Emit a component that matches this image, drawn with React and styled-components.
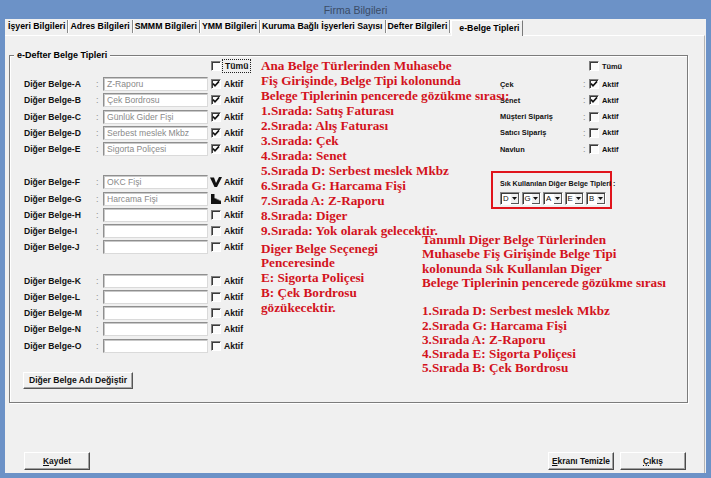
import React from 'react';
import styled, { createGlobalStyle } from 'styled-components';

const GlobalStyle = createGlobalStyle`
  html, body { margin: 0; padding: 0; background: #6c92c7; }
  body { width: 711px; height: 478px; overflow: hidden; font-family: "Liberation Sans", Arial, sans-serif; }
  #root { width: 711px; height: 478px; }
`;

const Window = styled.div`
  width: 711px;
  height: 478px;
  box-sizing: border-box;
  background: #6c92c7;
  padding: 0 5px 5px 5px;
  display: flex;
  flex-direction: column;
`;

const TitleBar = styled.div`
  height: 19px;
  flex: none;
  display: flex;
  align-items: center;
  justify-content: center;
  font-family: "Liberation Sans", Arial, sans-serif;
  font-size: 10.5px;
  color: #3b4c66;
`;

const Client = styled.div`
  flex: 1;
  min-height: 0;
  background: #f0f0f0;
  display: flex;
  flex-direction: column;
`;

const TabStrip = styled.div`
  height: 16px;
  flex: none;
  display: flex;
  align-items: flex-end;
  padding-left: 1px;
  position: relative;
  z-index: 1;
`;

const Tab = styled.div`
  height: 13px;
  line-height: 13px;
  padding: 0 2px;
  margin-bottom: 2px;
  font-size: 8.75px;
  font-weight: bold;
  color: #000;
  white-space: nowrap;
  border-right: 1px solid #8a8a8a;
  box-shadow: 1px 0 0 #ffffff;
`;

const ActiveTab = styled.div`
  height: 16px;
  line-height: 15px;
  padding: 0 3px 0 7px;
  margin-left: 1px;
  margin-bottom: -1px;
  font-size: 8.75px;
  font-weight: bold;
  color: #000;
  white-space: nowrap;
  background: #f0f0f0;
  border-top: 1px solid #fff;
  border-left: 1px solid #fff;
  border-right: 1px solid #7a7a7a;
  box-sizing: border-box;
`;

const Page = styled.div`
  flex: 1;
  min-height: 0;
  display: flex;
  flex-direction: column;
  border-top: 1px solid #ffffff;
  border-right: 1px solid #b5b5b5;
  margin-right: 1px;
`;

const GroupBox = styled.div`
  position: relative;
  margin: 19px 0 0 4px;
  width: 679px;
  height: 348px;
  box-sizing: border-box;
  border: 1px solid #7c7c7c;
  box-shadow: inset 1px 1px 0 #ffffff, 1px 1px 0 #ffffff;
  padding: 3px 0 0 0;
  display: flex;
`;

const Legend = styled.div`
  position: absolute;
  top: -7px;
  left: 4px;
  padding: 0 3px;
  background: #f0f0f0;
  font-size: 9px;
  font-weight: bold;
  line-height: 12px;
  color: #000;
`;

const LeftCol = styled.div`
  width: 467px;
  flex: none;
  padding-left: 14px;
  display: flex;
  flex-direction: column;
`;

const RightCol = styled.div`
  flex: 1;
  display: flex;
  flex-direction: column;
`;

const AllRow = styled.div`
  height: 14px;
  margin-bottom: 3px;
  display: flex;
  align-items: center;
  padding-left: ${p => p.$indent}px;
`;

const Group = styled.div`
  display: flex;
  flex-direction: column;
  margin-top: ${p => p.$gap || 0}px;
`;

const Row = styled.div`
  height: 16.25px;
  display: flex;
  align-items: center;
  padding-left: ${p => p.$pad || 0}px;
`;

const Label = styled.div`
  width: ${p => p.$w}px;
  flex: none;
  font-size: ${p => p.$size}px;
  font-weight: bold;
  color: #111;
  white-space: nowrap;
`;

const Colon = styled.div`
  width: ${p => p.$w}px;
  flex: none;
  font-size: 9px;
  color: #8d8d8d;
  line-height: 10px;
`;

const Field = styled.div`
  width: 105px;
  height: 14px;
  flex: none;
  box-sizing: border-box;
  background: #ffffff;
  border: 1px solid;
  border-color: #8f8f8f #dadada #dadada #8f8f8f;
  box-shadow: inset 1px 1px 0 #c8c8c8;
  font-size: 8.6px;
  line-height: 12px;
  padding-left: 3px;
  color: #8a8a8a;
  white-space: nowrap;
  overflow: hidden;
`;

const Check = styled.div`
  display: flex;
  align-items: center;
  margin-left: ${p => p.$ml || 0}px;
  gap: 3px;
`;

const Box = styled.span`
  width: 10px;
  height: 10px;
  flex: none;
  box-sizing: border-box;
  background: #fbfbfb;
  border-top: 1px solid #7d7d7d;
  border-left: 1px solid #7d7d7d;
  border-right: 1px solid #ffffff;
  border-bottom: 1px solid #ffffff;
  box-shadow: inset 1px 1px 0 #3a3a3a;
  display: flex;
  align-items: center;
  justify-content: center;
`;

const Glyph = styled.span`
  width: 12px;
  height: 12px;
  flex: none;
  margin-left: -1px;
  margin-right: -1px;
  display: flex;
  align-items: center;
  justify-content: center;
`;

const CheckText = styled.span`
  font-size: ${p => p.$size}px;
  font-weight: bold;
  color: #111;
  white-space: nowrap;
  ${p => p.$focus && `outline: 1px dotted #222; outline-offset: 1px; padding: 0 1px;`}
`;

const RenameButton = styled.button`
  margin-top: 18px;
  align-self: flex-start;
  margin-left: -1px;
  width: 110px;
  height: 17px;
  padding: 0;
  background: #f0f0f0;
  border: 1px solid;
  border-color: #ffffff #555555 #555555 #ffffff;
  box-shadow: inset -1px -1px 0 #a5a5a5;
  font-family: "Liberation Sans", Arial, sans-serif;
  font-size: 8.6px;
  font-weight: bold;
  color: #111;
`;

const RedBox = styled.div`
  margin-top: 14px;
  width: 121px;
  height: 38px;
  box-sizing: border-box;
  border: 2px solid #e0141c;
  padding: 6px 0 0 7px;
  display: flex;
  flex-direction: column;
  gap: 3px;
`;

const SmallTitle = styled.div`
  font-size: 7.1px;
  font-weight: bold;
  color: #111;
  white-space: nowrap;
  line-height: 10px;
`;

const ComboRow = styled.div`
  display: flex;
  gap: 2px;
`;

const Combo = styled.div`
  width: 19.5px;
  height: 13px;
  box-sizing: border-box;
  display: flex;
  border: 1px solid;
  border-color: #8a8a8a #ffffff #ffffff #8a8a8a;
  box-shadow: inset 1px 1px 0 #3c3c3c;
  background: #ffffff;
`;

const ComboValue = styled.div`
  flex: 1;
  font-size: 7.8px;
  line-height: 11px;
  padding-left: 2px;
  color: #111;
`;

const ComboButton = styled.div`
  width: 8px;
  height: 10px;
  margin: 1px 0 0 0;
  box-sizing: border-box;
  background: #f0f0f0;
  border-right: 1px solid #555;
  border-bottom: 1px solid #555;
  display: flex;
  align-items: center;
  justify-content: center;
`;

const Note = styled.div`
  position: absolute;
  left: ${p => p.$x}px;
  top: ${p => p.$y}px;
  font-family: "Liberation Serif", "Times New Roman", serif;
  font-weight: bold;
  font-size: 13.2px;
  line-height: ${p => p.$lh}px;
  color: #d3131d;
  white-space: nowrap;
  pointer-events: none;
`;

const Footer = styled.div`
  margin-top: auto;
  display: flex;
  align-items: flex-end;
  padding: 0 18px 3px 19px;
  gap: 6px;
`;

const FootButton = styled.button`
  width: 66px;
  height: 18px;
  padding: 0;
  background: #f0f0f0;
  border: 1px solid;
  border-color: #ffffff #4a4a4a #4a4a4a #ffffff;
  box-shadow: inset -1px -1px 0 #a0a0a0;
  font-family: "Liberation Sans", Arial, sans-serif;
  font-size: 8.4px;
  font-weight: bold;
  color: #111;
  margin-left: ${p => (p.$push ? 'auto' : '0')};
  u { text-decoration: underline; }
`;

const Tick = () => (
  <svg width="8" height="8" viewBox="0 0 8 8">
    <path d="M1 3.6 L3 5.8 L7 1.4" fill="none" stroke="#111" strokeWidth="1.6" />
  </svg>
);

const BigV = () => (
  <svg width="12" height="12" viewBox="0 0 12 12">
    <path d="M0 1.5 L4 1.5 L6 7 L9 1 L12 1 L7 11 L4.5 11 Z" fill="#111" />
  </svg>
);

const Flag = () => (
  <svg width="12" height="12" viewBox="0 0 12 12">
    <path d="M1 1 L4.5 1 L4.5 5 L11 8 L11 11 L1 11 Z" fill="#111" />
    <path d="M4.5 5 L11 8" stroke="#777" strokeWidth="0.8" />
  </svg>
);

const Arrow = () => (
  <svg width="5" height="3" viewBox="0 0 5 3">
    <path d="M0 0 L5 0 L2.5 3 Z" fill="#111" />
  </svg>
);

const leftGroups = [
  [
    ['A', 'Z-Raporu', 'on'],
    ['B', 'Çek Bordrosu', 'on'],
    ['C', 'Günlük Gider Fişi', 'on'],
    ['D', 'Serbest meslek Mkbz', 'on'],
    ['E', 'Sigorta Poliçesi', 'on'],
  ],
  [
    ['F', 'OKC Fişi', 'v'],
    ['G', 'Harcama Fişi', 'flag'],
    ['H', '', 'off'],
    ['I', '', 'off'],
    ['J', '', 'off'],
  ],
  [
    ['K', '', 'off'],
    ['L', '', 'off'],
    ['M', '', 'off'],
    ['N', '', 'off'],
    ['O', '', 'off'],
  ],
];

const rightRows = [
  ['Çek', true],
  ['Senet', true],
  ['Müşteri Sipariş', false],
  ['Satıcı Sipariş', false],
  ['Navlun', false],
];

const tabs = [
  'İşyeri Bilgileri',
  'Adres Bilgileri',
  'SMMM Bilgileri',
  'YMM Bilgileri',
  'Kuruma Bağlı İşyerleri Sayısı',
  'Defter Bilgileri',
];

const note1 = [
  'Ana Belge Türlerinden Muhasebe',
  'Fiş Girişinde, Belge Tipi kolonunda',
  'Belege Tiplerinin pencerede gözükme sırası:',
  '1.Sırada: Satış Faturası',
  '2.Sırada: Alış Faturası',
  '3.Sırada: Çek',
  '4.Sırada: Senet',
  '5.Sırada D: Serbest meslek Mkbz',
  '6.Sırada G: Harcama Fişi',
  '7.Sırada A: Z-Raporu',
  '8.Sırada: Diger',
  '9.Sırada: Yok olarak gelecektir.',
];

const note2 = [
  'Diger Belge Seçenegi',
  'Penceresinde',
  'E: Sigorta Poliçesi',
  'B: Çek Bordrosu',
  'gözükecektir.',
];

const note3 = [
  'Tanımlı Diger Belge Türlerinden',
  'Muhasebe Fiş Girişinde Belge Tipi',
  'kolonunda Sık Kullanılan Diger',
  'Belege Tiplerinin pencerede gözükme sırası',
  '',
  '1.Sırada D: Serbest meslek Mkbz',
  '2.Sırada G: Harcama Fişi',
  '3.Sırada A: Z-Raporu',
  '4.Sırada E: Sigorta Poliçesi',
  '5.Sırada B: Çek Bordrosu',
];

const Lines = ({ lines }) =>
  lines.map((l, i) => <div key={i}>{l || '\u00a0'}</div>);

const Mark = ({ kind }) => {
  if (kind === 'v') return <Glyph><BigV /></Glyph>;
  if (kind === 'flag') return <Glyph><Flag /></Glyph>;
  return <Box>{kind === 'on' && <Tick />}</Box>;
};

export default function App() {
  return (
    <>
      <GlobalStyle />
      <Window>
        <TitleBar>Firma Bilgileri</TitleBar>
        <Client>
          <TabStrip>
            {tabs.map(t => (
              <Tab key={t}>{t}</Tab>
            ))}
            <ActiveTab>e-Belge Tipleri</ActiveTab>
          </TabStrip>
          <Page>
            <GroupBox>
              <Legend>e-Defter Belge Tipleri</Legend>
              <LeftCol>
                <AllRow $indent={187}>
                  <Check>
                    <Box />
                    <CheckText $size={8.6} $focus>Tümü</CheckText>
                  </Check>
                </AllRow>
                {leftGroups.map((g, gi) => (
                  <Group key={gi} $gap={gi === 0 ? 0 : 17}>
                    {g.map(([letter, value, state]) => (
                      <Row key={letter}>
                        <Label $w={72} $size={8.6}>Diğer Belge-{letter}</Label>
                        <Colon $w={7}>:</Colon>
                        <Field>{value}</Field>
                        <Check $ml={3}>
                          <Mark kind={state} />
                          <CheckText $size={8.6}>Aktif</CheckText>
                        </Check>
                      </Row>
                    ))}
                  </Group>
                ))}
                <RenameButton>Diğer Belge Adı Değiştir</RenameButton>
              </LeftCol>
              <RightCol>
                <AllRow $indent={98}>
                  <Check>
                    <Box />
                    <CheckText $size={7.4}>Tümü</CheckText>
                  </Check>
                </AllRow>
                <Group>
                  {rightRows.map(([name, on]) => (
                    <Row key={name} $pad={9}>
                      <Label $w={83} $size={7.4}>{name}</Label>
                      <Colon $w={6}>:</Colon>
                      <Check>
                        <Box>{on && <Tick />}</Box>
                        <CheckText $size={7.4}>Aktif</CheckText>
                      </Check>
                    </Row>
                  ))}
                </Group>
                <RedBox>
                  <SmallTitle>Sık Kullanılan Diğer Belge Tipleri :</SmallTitle>
                  <ComboRow>
                    {['D', 'G', 'A', 'E', 'B'].map(v => (
                      <Combo key={v}>
                        <ComboValue>{v}</ComboValue>
                        <ComboButton><Arrow /></ComboButton>
                      </Combo>
                    ))}
                  </ComboRow>
                </RedBox>
              </RightCol>
              <Note $x={251} $y={1.5} $lh={15}>
                <Lines lines={note1} />
              </Note>
              <Note $x={251} $y={185.5} $lh={14.75}>
                <Lines lines={note2} />
              </Note>
              <Note $x={412} $y={177} $lh={14.25}>
                <Lines lines={note3} />
              </Note>
            </GroupBox>
            <Footer>
              <FootButton><u>K</u>aydet</FootButton>
              <FootButton $push><u>E</u>kranı Temizle</FootButton>
              <FootButton><u>Ç</u>ıkış</FootButton>
            </Footer>
          </Page>
        </Client>
      </Window>
    </>
  );
}
